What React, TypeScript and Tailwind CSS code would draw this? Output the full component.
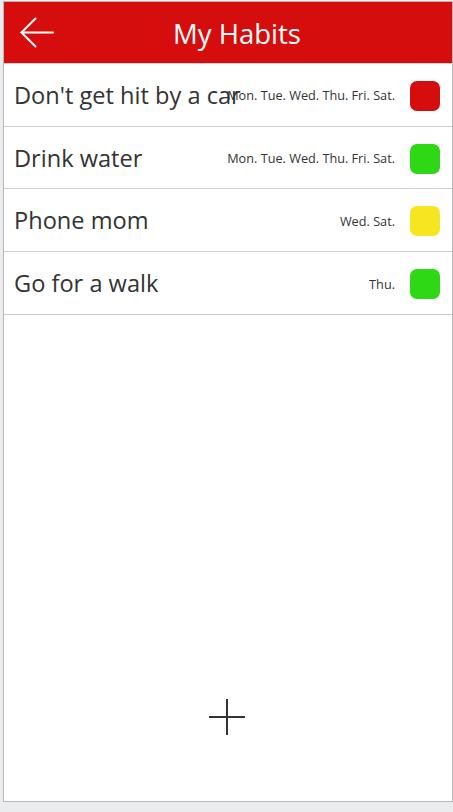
import React from "react";

const habits = [
  { name: "Don't get hit by a car", days: "Mon. Tue. Wed. Thu. Fri. Sat.", color: "bg-[#d50d0d]" },
  { name: "Drink water", days: "Mon. Tue. Wed. Thu. Fri. Sat.", color: "bg-[#2fd814]" },
  { name: "Phone mom", days: "Wed. Sat.", color: "bg-[#f6e520]" },
  { name: "Go for a walk", days: "Thu.", color: "bg-[#2fd814]" },
];

export default function App() {
  return (
    <div className="w-[453px] h-[812px] bg-[#ebecee] pt-px overflow-hidden" style={{ fontFamily: '"Open Sans", "Noto Sans", sans-serif' }}>
      <div className="ml-[3px] w-[450px] h-[801px] border border-[#b8b8b8] bg-white flex flex-col">
        <div className="h-[61px] bg-[#d50d0d] flex items-center relative border-b border-[#cfcfcf] box-content">
          <svg className="absolute left-[13px] top-[15px]" width="40" height="32" viewBox="0 0 40 32" fill="none" stroke="white" strokeWidth="2" strokeLinecap="round">
            <line x1="4.5" y1="15.5" x2="36" y2="15.5" />
            <polyline points="18.5,1.5 4.5,15.5 18.5,29.5" />
          </svg>
          <div className="w-full text-center text-white text-[27.5px] leading-none pl-[18px] pt-[2px]">My Habits</div>
        </div>
        {habits.map((h) => (
          <div key={h.name} className="h-[62.7px] border-b border-[#cfcfcf] flex items-center pl-[10px] pr-[12px] pt-[2px] box-border">
            <div className="flex-1 min-w-0 whitespace-nowrap text-[23.6px] text-[#333333] leading-none">{h.name}</div>
            <div className="relative text-[12.7px] text-[#333333] whitespace-nowrap mr-[15px] leading-none">{h.days}</div>
            <div className={`w-[30px] h-[30px] rounded-[7px] ${h.color} flex-none`} />
          </div>
        ))}
        <div className="flex-1 flex items-end justify-center pb-[66px] pr-[2px]">
          <svg width="36" height="36" viewBox="0 0 36 36" stroke="#333333" strokeWidth="2">
            <line x1="18" y1="0" x2="18" y2="36" />
            <line x1="0" y1="18" x2="36" y2="18" />
          </svg>
        </div>
      </div>
    </div>
  );
}
